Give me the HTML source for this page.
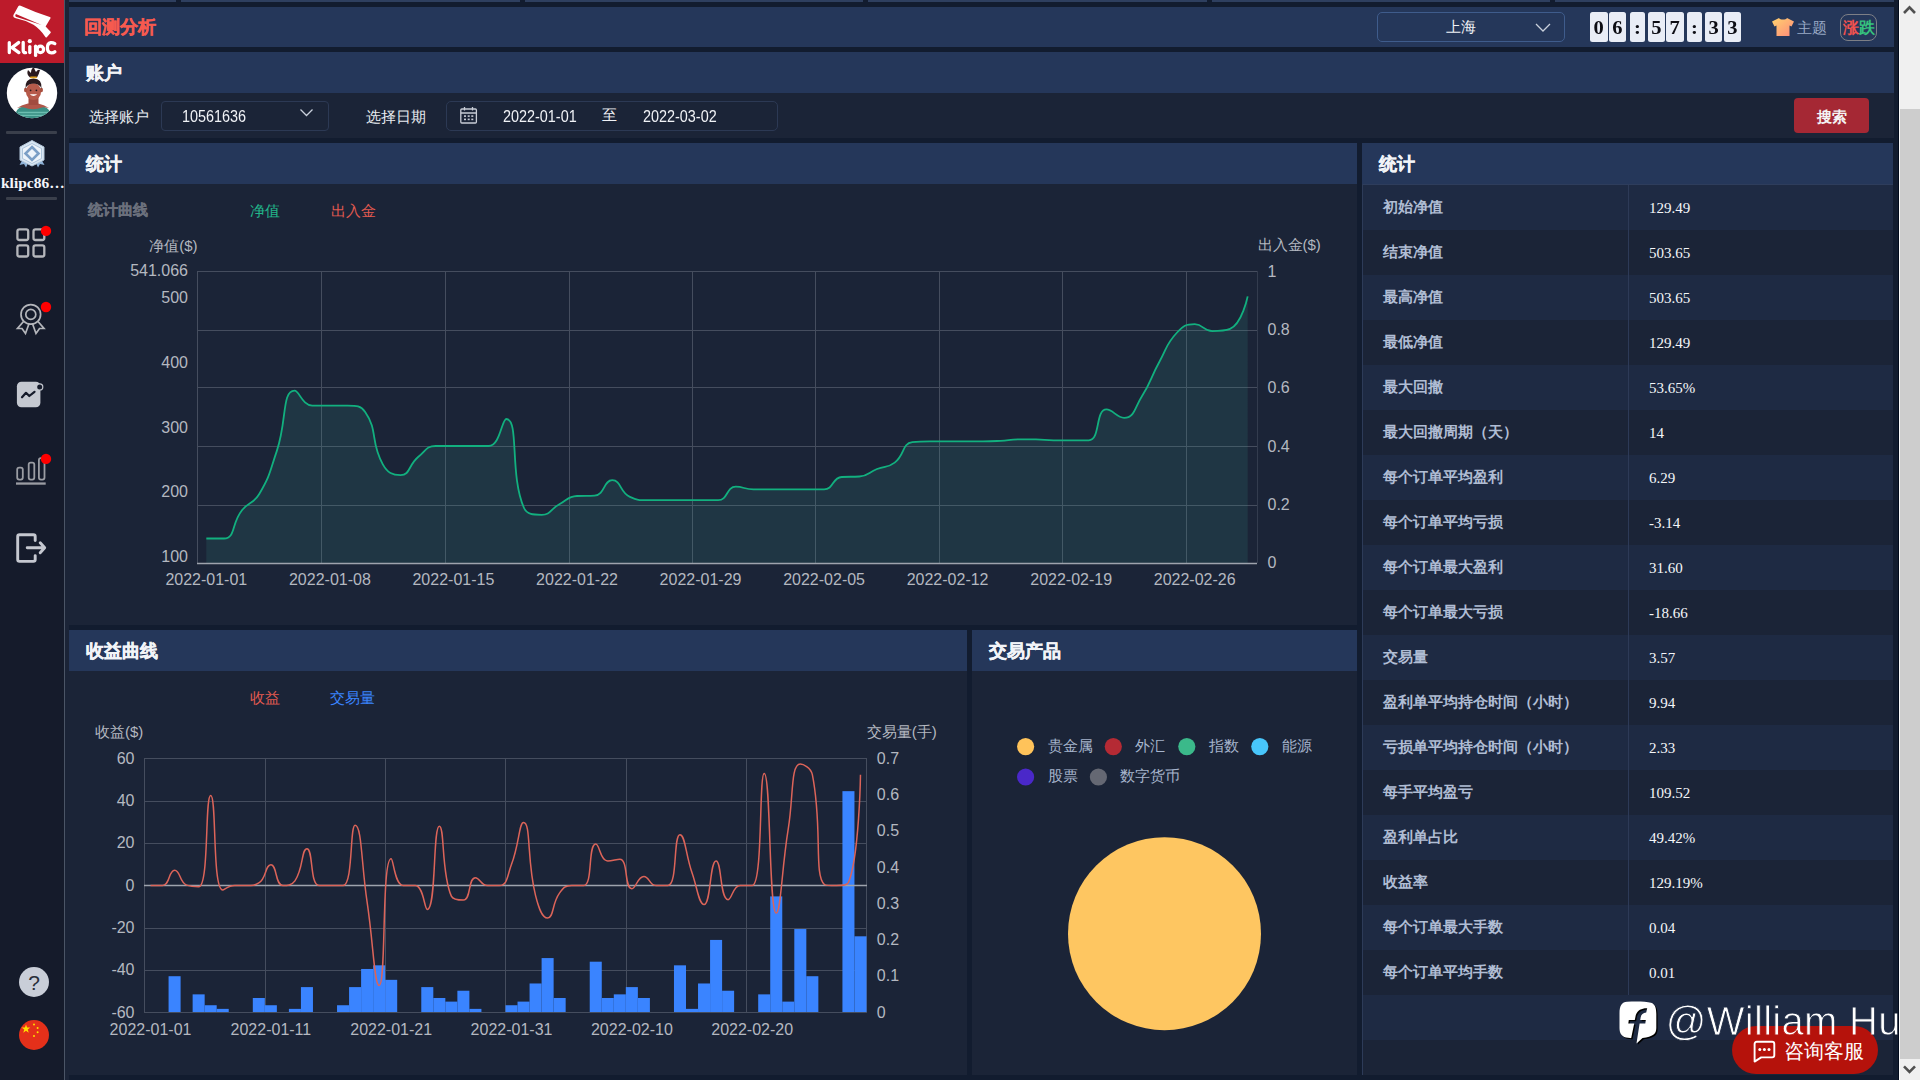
<!DOCTYPE html>
<html><head><meta charset="utf-8"><title>回测分析</title>
<style>
*{margin:0;padding:0;box-sizing:border-box}
html,body{width:1920px;height:1080px;overflow:hidden;background:#121c2f;font-family:"Liberation Sans",sans-serif;}
div,span,svg{position:absolute}
.t{white-space:nowrap;line-height:1}
.hd{background:#25375a}
.bd{background:#1b2437}
.ttl{color:#f2f4f8;font-weight:bold;font-size:18px;-webkit-text-stroke:0.35px #f2f4f8}
</style></head><body>

<div style="left:0;top:0;width:64px;height:1080px;background:#151b2b"></div>
<div style="left:64px;top:0;width:1px;height:1080px;background:#4b5566"></div>
<div style="left:65px;top:0;width:4px;height:1080px;background:#1b2437"></div>
<div style="left:69px;top:0;width:107px;height:2px;background:#2e3f5f"></div>
<div style="left:181px;top:0;width:339px;height:2px;background:#2e3f5f"></div>
<div style="left:525px;top:0;width:338px;height:2px;background:#2e3f5f"></div>
<div style="left:868px;top:0;width:339px;height:2px;background:#2e3f5f"></div>
<div style="left:1212px;top:0;width:338px;height:2px;background:#2e3f5f"></div>
<div style="left:1555px;top:0;width:339px;height:2px;background:#2e3f5f"></div>
<div class="hd" style="left:69px;top:7px;width:1825px;height:40px"></div>
<div class="hd" style="left:69px;top:52px;width:1825px;height:41px"></div>
<div class="bd" style="left:65px;top:93px;width:1829px;height:45px"></div>
<div class="hd" style="left:69px;top:143px;width:1288px;height:41px"></div>
<div class="bd" style="left:69px;top:184px;width:1288px;height:441px"></div>
<div class="hd" style="left:1362px;top:143px;width:531px;height:41px"></div>
<div class="bd" style="left:1362px;top:184px;width:531px;height:891px"></div>
<div class="hd" style="left:69px;top:630px;width:898px;height:41px"></div>
<div class="bd" style="left:69px;top:671px;width:898px;height:404px"></div>
<div class="hd" style="left:972px;top:630px;width:385px;height:41px"></div>
<div class="bd" style="left:972px;top:671px;width:385px;height:404px"></div>
<div style="left:1898px;top:0;width:1px;height:1080px;background:#020b1c"></div><div style="left:1899px;top:0;width:21px;height:1080px;background:#f0f0f0"></div><div style="left:1899px;top:0;width:1px;height:1080px;background:#fafafa"></div>
<div style="left:1900px;top:109px;width:20px;height:950px;background:#cdcdcd"></div>
<svg style="left:1899px;top:0" width="21" height="21"><path d="M5 13 L10.5 7.3 L16 13" fill="none" stroke="#505050" stroke-width="2.6"/></svg>
<svg style="left:1899px;top:1059px" width="21" height="21"><path d="M5 7.3 L10.5 13 L16 7.3" fill="none" stroke="#505050" stroke-width="2.6"/></svg>
<div class="t ttl" style="left:86.0px;top:63.5px">账户</div>
<div class="t ttl" style="left:86.0px;top:154.5px">统计</div>
<div class="t ttl" style="left:1379.0px;top:154.5px">统计</div>
<div class="t ttl" style="left:86.0px;top:641.5px">收益曲线</div>
<div class="t ttl" style="left:989.0px;top:641.5px">交易产品</div>
<div class="t" style="left:84px;top:18px;font-size:18px;font-weight:bold;color:#f65a4f;-webkit-text-stroke:0.35px #f65a4f">回测分析</div>
<div style="left:1377px;top:12px;width:188px;height:30px;border:1px solid #3f5c8c;border-radius:5px"></div>
<div class="t" style="left:1446px;top:19px;font-size:15px;color:#f0f2f6">上海</div>
<svg style="left:1534px;top:21px" width="18" height="12"><path d="M2 3 L9 10 L16 3" fill="none" stroke="#c9d0dc" stroke-width="1.3"/></svg>
<div style="left:1590.0px;top:12px;width:17.5px;height:29.7px;background:#e9edf6;border-radius:2.5px"></div>
<div class="t" style="left:1590.0px;top:18px;width:17.5px;text-align:center;font-family:'Liberation Serif',serif;font-weight:bold;font-size:19px;transform:scaleX(1.08);color:#0d0d14">0</div>
<div style="left:1609.4px;top:12px;width:16.6px;height:29.7px;background:#e9edf6;border-radius:2.5px"></div>
<div class="t" style="left:1609.4px;top:18px;width:16.6px;text-align:center;font-family:'Liberation Serif',serif;font-weight:bold;font-size:19px;transform:scaleX(1.08);color:#0d0d14">6</div>
<div style="left:1630.0px;top:12px;width:15.0px;height:29.7px;background:#e9edf6;border-radius:2.5px"></div>
<div class="t" style="left:1630.0px;top:18px;width:15.0px;text-align:center;font-family:'Liberation Serif',serif;font-weight:bold;font-size:19px;transform:scaleX(1.08);color:#0d0d14">:</div>
<div style="left:1648.2px;top:12px;width:16.8px;height:29.7px;background:#e9edf6;border-radius:2.5px"></div>
<div class="t" style="left:1648.2px;top:18px;width:16.8px;text-align:center;font-family:'Liberation Serif',serif;font-weight:bold;font-size:19px;transform:scaleX(1.08);color:#0d0d14">5</div>
<div style="left:1666.4px;top:12px;width:17.3px;height:29.7px;background:#e9edf6;border-radius:2.5px"></div>
<div class="t" style="left:1666.4px;top:18px;width:17.3px;text-align:center;font-family:'Liberation Serif',serif;font-weight:bold;font-size:19px;transform:scaleX(1.08);color:#0d0d14">7</div>
<div style="left:1687.0px;top:12px;width:15.0px;height:29.7px;background:#e9edf6;border-radius:2.5px"></div>
<div class="t" style="left:1687.0px;top:18px;width:15.0px;text-align:center;font-family:'Liberation Serif',serif;font-weight:bold;font-size:19px;transform:scaleX(1.08);color:#0d0d14">:</div>
<div style="left:1705.2px;top:12px;width:17.3px;height:29.7px;background:#e9edf6;border-radius:2.5px"></div>
<div class="t" style="left:1705.2px;top:18px;width:17.3px;text-align:center;font-family:'Liberation Serif',serif;font-weight:bold;font-size:19px;transform:scaleX(1.08);color:#0d0d14">3</div>
<div style="left:1724.3px;top:12px;width:16.7px;height:29.7px;background:#e9edf6;border-radius:2.5px"></div>
<div class="t" style="left:1724.3px;top:18px;width:16.7px;text-align:center;font-family:'Liberation Serif',serif;font-weight:bold;font-size:19px;transform:scaleX(1.08);color:#0d0d14">3</div>
<svg style="left:1771px;top:17px" width="24" height="20" viewBox="0 0 24 20"><defs><linearGradient id="sg" x1="0" y1="0" x2="1" y2="1"><stop offset="0" stop-color="#ffd36e"/><stop offset="1" stop-color="#ff8a7a"/></linearGradient></defs>
<path d="M8 1 C9 3 15 3 16 1 L23 4.5 L20.5 9.5 L18.5 8.5 L18.5 19 L5.5 19 L5.5 8.5 L3.5 9.5 L1 4.5 Z" fill="url(#sg)"/></svg>
<div class="t" style="left:1797px;top:19.5px;font-size:15px;color:#9aaac6">主题</div>
<div style="left:1840px;top:14px;width:37px;height:27px;border:1.3px solid #7d7f86;border-radius:8px"></div>
<div class="t" style="left:1843px;top:20.2px;font-size:15.5px;font-weight:bold;color:#f0524e">涨<span style="position:static;color:#36c27e">跌</span></div>
<div class="t" style="left:89px;top:108.5px;font-size:15px;color:#e8ebf0">选择账户</div>
<div style="left:161px;top:101px;width:168px;height:30px;border:1px solid #2c3954;border-radius:4px"></div>
<div class="t" style="left:181.5px;top:108.5px;font-size:16px;color:#f0f2f6;transform-origin:0 0;transform:scaleX(0.9)">10561636</div>
<svg style="left:298px;top:107px" width="17" height="12"><path d="M2.5 2.5 L8.5 8.5 L14.5 2.5" fill="none" stroke="#c9d0dc" stroke-width="1.3"/></svg>
<div class="t" style="left:366px;top:108.5px;font-size:15px;color:#e8ebf0">选择日期</div>
<div style="left:446px;top:101px;width:332px;height:30px;border:1px solid #2c3954;border-radius:5px"></div>
<svg style="left:459px;top:106px" width="20" height="19" viewBox="0 0 20 19"><g fill="none" stroke="#c8ccd6" stroke-width="1.3"><rect x="1.8" y="3" width="15.6" height="14" rx="1"/><path d="M1.8 7 H17.4 M5.5 1 V4.5 M13.5 1 V4.5"/></g>
<g fill="#c8ccd6"><rect x="5" y="9.3" width="2" height="1.6"/><rect x="8.7" y="9.3" width="2" height="1.6"/><rect x="12.3" y="9.3" width="2" height="1.6"/><rect x="5" y="12.6" width="2" height="1.6"/><rect x="8.7" y="12.6" width="2" height="1.6"/><rect x="12.3" y="12.6" width="2" height="1.6"/></g></svg>
<div class="t" style="left:502.5px;top:108.5px;font-size:16px;color:#f0f2f6;transform-origin:0 0;transform:scaleX(0.9)">2022-01-01</div>
<div class="t" style="left:601.5px;top:106.5px;font-size:15px;color:#f0f2f6">至</div>
<div class="t" style="left:642.5px;top:108.5px;font-size:16px;color:#f0f2f6;transform-origin:0 0;transform:scaleX(0.9)">2022-03-02</div>
<div style="left:1794px;top:98px;width:75px;height:35px;background:#a52834;border-radius:4px"></div>
<div class="t" style="left:1794px;top:108.5px;width:75px;text-align:center;font-size:15px;font-weight:bold;color:#f4f4f4">搜索</div>
<div style="left:1362px;top:185px;width:531px;height:45px;background:#1e2a43"></div>
<div style="left:1362px;top:275px;width:531px;height:45px;background:#1e2a43"></div>
<div style="left:1362px;top:365px;width:531px;height:45px;background:#1e2a43"></div>
<div style="left:1362px;top:455px;width:531px;height:45px;background:#1e2a43"></div>
<div style="left:1362px;top:545px;width:531px;height:45px;background:#1e2a43"></div>
<div style="left:1362px;top:635px;width:531px;height:45px;background:#1e2a43"></div>
<div style="left:1362px;top:725px;width:531px;height:45px;background:#1e2a43"></div>
<div style="left:1362px;top:815px;width:531px;height:45px;background:#1e2a43"></div>
<div style="left:1362px;top:905px;width:531px;height:45px;background:#1e2a43"></div>
<div style="left:1362px;top:995px;width:531px;height:45px;background:#1e2a43"></div>
<div style="left:1362px;top:184px;width:531px;height:1px;background:#2e3d5c"></div>
<div style="left:1362px;top:184px;width:1px;height:891px;background:#2d3b58"></div>
<div style="left:1628px;top:185px;width:1px;height:810px;background:#2d3a57"></div>
<div class="t" style="left:1383px;top:199px;font-size:15px;font-weight:bold;color:#b0bdd4">初始净值</div>
<div class="t" style="left:1649px;top:201.0px;font-size:15px;font-family:'Liberation Serif',serif;color:#f4f6f9">129.49</div>
<div class="t" style="left:1383px;top:244px;font-size:15px;font-weight:bold;color:#b0bdd4">结束净值</div>
<div class="t" style="left:1649px;top:246.0px;font-size:15px;font-family:'Liberation Serif',serif;color:#f4f6f9">503.65</div>
<div class="t" style="left:1383px;top:289px;font-size:15px;font-weight:bold;color:#b0bdd4">最高净值</div>
<div class="t" style="left:1649px;top:291.0px;font-size:15px;font-family:'Liberation Serif',serif;color:#f4f6f9">503.65</div>
<div class="t" style="left:1383px;top:334px;font-size:15px;font-weight:bold;color:#b0bdd4">最低净值</div>
<div class="t" style="left:1649px;top:336.0px;font-size:15px;font-family:'Liberation Serif',serif;color:#f4f6f9">129.49</div>
<div class="t" style="left:1383px;top:379px;font-size:15px;font-weight:bold;color:#b0bdd4">最大回撤</div>
<div class="t" style="left:1649px;top:381.0px;font-size:15px;font-family:'Liberation Serif',serif;color:#f4f6f9">53.65%</div>
<div class="t" style="left:1383px;top:424px;font-size:15px;font-weight:bold;color:#b0bdd4">最大回撤周期（天）</div>
<div class="t" style="left:1649px;top:426.0px;font-size:15px;font-family:'Liberation Serif',serif;color:#f4f6f9">14</div>
<div class="t" style="left:1383px;top:469px;font-size:15px;font-weight:bold;color:#b0bdd4">每个订单平均盈利</div>
<div class="t" style="left:1649px;top:471.0px;font-size:15px;font-family:'Liberation Serif',serif;color:#f4f6f9">6.29</div>
<div class="t" style="left:1383px;top:514px;font-size:15px;font-weight:bold;color:#b0bdd4">每个订单平均亏损</div>
<div class="t" style="left:1649px;top:516.0px;font-size:15px;font-family:'Liberation Serif',serif;color:#f4f6f9">-3.14</div>
<div class="t" style="left:1383px;top:559px;font-size:15px;font-weight:bold;color:#b0bdd4">每个订单最大盈利</div>
<div class="t" style="left:1649px;top:561.0px;font-size:15px;font-family:'Liberation Serif',serif;color:#f4f6f9">31.60</div>
<div class="t" style="left:1383px;top:604px;font-size:15px;font-weight:bold;color:#b0bdd4">每个订单最大亏损</div>
<div class="t" style="left:1649px;top:606.0px;font-size:15px;font-family:'Liberation Serif',serif;color:#f4f6f9">-18.66</div>
<div class="t" style="left:1383px;top:649px;font-size:15px;font-weight:bold;color:#b0bdd4">交易量</div>
<div class="t" style="left:1649px;top:651.0px;font-size:15px;font-family:'Liberation Serif',serif;color:#f4f6f9">3.57</div>
<div class="t" style="left:1383px;top:694px;font-size:15px;font-weight:bold;color:#b0bdd4">盈利单平均持仓时间（小时）</div>
<div class="t" style="left:1649px;top:696.0px;font-size:15px;font-family:'Liberation Serif',serif;color:#f4f6f9">9.94</div>
<div class="t" style="left:1383px;top:739px;font-size:15px;font-weight:bold;color:#b0bdd4">亏损单平均持仓时间（小时）</div>
<div class="t" style="left:1649px;top:741.0px;font-size:15px;font-family:'Liberation Serif',serif;color:#f4f6f9">2.33</div>
<div class="t" style="left:1383px;top:784px;font-size:15px;font-weight:bold;color:#b0bdd4">每手平均盈亏</div>
<div class="t" style="left:1649px;top:786.0px;font-size:15px;font-family:'Liberation Serif',serif;color:#f4f6f9">109.52</div>
<div class="t" style="left:1383px;top:829px;font-size:15px;font-weight:bold;color:#b0bdd4">盈利单占比</div>
<div class="t" style="left:1649px;top:831.0px;font-size:15px;font-family:'Liberation Serif',serif;color:#f4f6f9">49.42%</div>
<div class="t" style="left:1383px;top:874px;font-size:15px;font-weight:bold;color:#b0bdd4">收益率</div>
<div class="t" style="left:1649px;top:876.0px;font-size:15px;font-family:'Liberation Serif',serif;color:#f4f6f9">129.19%</div>
<div class="t" style="left:1383px;top:919px;font-size:15px;font-weight:bold;color:#b0bdd4">每个订单最大手数</div>
<div class="t" style="left:1649px;top:921.0px;font-size:15px;font-family:'Liberation Serif',serif;color:#f4f6f9">0.04</div>
<div class="t" style="left:1383px;top:964px;font-size:15px;font-weight:bold;color:#b0bdd4">每个订单平均手数</div>
<div class="t" style="left:1649px;top:966.0px;font-size:15px;font-family:'Liberation Serif',serif;color:#f4f6f9">0.01</div>
<svg style="left:0;top:0" width="1920" height="1080">
<path d="M197 271.5 H1258" stroke="#454d5e" stroke-width="1"/>
<path d="M197 330.5 H1258" stroke="#454d5e" stroke-width="1"/>
<path d="M197 387.5 H1258" stroke="#454d5e" stroke-width="1"/>
<path d="M197 446.5 H1258" stroke="#454d5e" stroke-width="1"/>
<path d="M197 505.5 H1258" stroke="#454d5e" stroke-width="1"/>
<path d="M197.5 271 V563" stroke="#454d5e" stroke-width="1"/>
<path d="M321.5 271 V563" stroke="#454d5e" stroke-width="1"/>
<path d="M445.5 271 V563" stroke="#454d5e" stroke-width="1"/>
<path d="M569.5 271 V563" stroke="#454d5e" stroke-width="1"/>
<path d="M692.5 271 V563" stroke="#454d5e" stroke-width="1"/>
<path d="M815.5 271 V563" stroke="#454d5e" stroke-width="1"/>
<path d="M939.5 271 V563" stroke="#454d5e" stroke-width="1"/>
<path d="M1062.5 271 V563" stroke="#454d5e" stroke-width="1"/>
<path d="M1186.5 271 V563" stroke="#454d5e" stroke-width="1"/>
<path d="M1257.5 271 V563" stroke="#333c4e" stroke-width="1"/>
<path d="M206.32 538.50 C206.32 538.50 217.82 538.50 223.97 538.50 C235.47 538.50 231.47 523.50 241.62 510.70 C249.12 501.25 253.25 504.26 259.27 494.00 C270.90 474.21 269.36 472.74 276.93 450.60 C287.01 421.09 281.69 390.70 294.57 390.70 C299.34 390.70 302.22 405.60 312.23 405.60 C319.87 405.60 321.05 405.60 329.88 405.60 C338.70 405.60 338.97 405.60 347.52 405.60 C356.62 405.60 360.70 405.60 365.17 412.00 C378.35 430.85 369.98 441.41 382.82 464.40 C387.63 473.01 392.54 475.20 400.48 475.20 C410.19 475.20 408.43 465.02 418.12 457.00 C426.08 450.42 426.23 446.00 435.77 446.00 C443.88 446.00 444.60 446.00 453.42 446.00 C462.25 446.00 462.25 446.00 471.07 446.00 C479.90 446.00 482.48 446.00 488.72 446.00 C500.13 446.00 501.75 419.00 506.38 419.00 C519.40 419.00 509.42 475.38 524.02 508.00 C527.07 514.80 533.21 514.80 541.67 514.80 C550.86 514.80 550.27 509.12 559.33 504.30 C567.92 499.72 567.71 496.44 576.97 496.00 C585.36 495.60 587.04 496.00 594.62 495.60 C604.69 495.07 603.61 480.20 612.27 480.20 C621.26 480.20 619.78 492.43 629.92 496.90 C637.43 500.20 638.67 500.20 647.58 500.20 C656.32 500.20 656.40 500.20 665.22 500.20 C674.05 500.20 674.05 500.20 682.88 500.20 C691.70 500.20 691.70 500.20 700.52 500.20 C709.35 500.20 710.36 500.20 718.17 500.20 C728.01 500.20 726.04 486.70 735.82 486.70 C743.69 486.70 744.60 489.40 753.47 489.40 C762.25 489.40 762.30 489.40 771.12 489.40 C779.95 489.40 779.95 489.40 788.77 489.40 C797.60 489.40 797.60 489.40 806.42 489.40 C815.25 489.40 816.13 489.40 824.07 489.40 C833.78 489.40 832.02 477.61 841.72 477.00 C849.67 476.50 850.91 477.00 859.38 476.50 C868.56 475.96 868.11 472.51 877.02 469.00 C885.76 465.56 887.43 468.10 894.67 462.60 C905.08 454.70 901.66 443.57 912.32 442.20 C919.31 441.30 921.14 441.30 929.97 441.30 C938.79 441.30 938.80 441.30 947.62 441.30 C956.45 441.30 956.45 441.30 965.27 441.30 C974.10 441.30 974.10 441.40 982.92 441.40 C991.75 441.40 991.76 441.30 1000.57 440.80 C1009.41 440.30 1009.39 439.40 1018.22 439.40 C1027.04 439.40 1027.06 439.40 1035.88 439.40 C1044.71 439.40 1044.69 440.30 1053.53 440.30 C1062.34 440.30 1062.35 440.30 1071.17 440.30 C1080.00 440.30 1082.97 440.30 1088.82 440.30 C1100.62 440.30 1095.08 409.40 1106.47 409.40 C1112.73 409.40 1116.83 417.80 1124.12 417.80 C1134.48 417.80 1134.43 408.07 1141.78 396.40 C1152.08 380.02 1150.02 378.73 1159.42 361.70 C1167.67 346.78 1165.84 344.43 1177.07 332.50 C1183.49 325.68 1185.77 324.20 1194.72 324.20 C1203.42 324.20 1203.27 331.10 1212.38 331.10 C1220.92 331.10 1224.29 331.10 1230.02 328.90 C1241.94 324.33 1247.67 296.40 1247.67 296.40 L1247.67 563 L206.32 563 Z" fill="#3ca096" fill-opacity="0.15"/>
<path d="M206.32 538.50 C206.32 538.50 217.82 538.50 223.97 538.50 C235.47 538.50 231.47 523.50 241.62 510.70 C249.12 501.25 253.25 504.26 259.27 494.00 C270.90 474.21 269.36 472.74 276.93 450.60 C287.01 421.09 281.69 390.70 294.57 390.70 C299.34 390.70 302.22 405.60 312.23 405.60 C319.87 405.60 321.05 405.60 329.88 405.60 C338.70 405.60 338.97 405.60 347.52 405.60 C356.62 405.60 360.70 405.60 365.17 412.00 C378.35 430.85 369.98 441.41 382.82 464.40 C387.63 473.01 392.54 475.20 400.48 475.20 C410.19 475.20 408.43 465.02 418.12 457.00 C426.08 450.42 426.23 446.00 435.77 446.00 C443.88 446.00 444.60 446.00 453.42 446.00 C462.25 446.00 462.25 446.00 471.07 446.00 C479.90 446.00 482.48 446.00 488.72 446.00 C500.13 446.00 501.75 419.00 506.38 419.00 C519.40 419.00 509.42 475.38 524.02 508.00 C527.07 514.80 533.21 514.80 541.67 514.80 C550.86 514.80 550.27 509.12 559.33 504.30 C567.92 499.72 567.71 496.44 576.97 496.00 C585.36 495.60 587.04 496.00 594.62 495.60 C604.69 495.07 603.61 480.20 612.27 480.20 C621.26 480.20 619.78 492.43 629.92 496.90 C637.43 500.20 638.67 500.20 647.58 500.20 C656.32 500.20 656.40 500.20 665.22 500.20 C674.05 500.20 674.05 500.20 682.88 500.20 C691.70 500.20 691.70 500.20 700.52 500.20 C709.35 500.20 710.36 500.20 718.17 500.20 C728.01 500.20 726.04 486.70 735.82 486.70 C743.69 486.70 744.60 489.40 753.47 489.40 C762.25 489.40 762.30 489.40 771.12 489.40 C779.95 489.40 779.95 489.40 788.77 489.40 C797.60 489.40 797.60 489.40 806.42 489.40 C815.25 489.40 816.13 489.40 824.07 489.40 C833.78 489.40 832.02 477.61 841.72 477.00 C849.67 476.50 850.91 477.00 859.38 476.50 C868.56 475.96 868.11 472.51 877.02 469.00 C885.76 465.56 887.43 468.10 894.67 462.60 C905.08 454.70 901.66 443.57 912.32 442.20 C919.31 441.30 921.14 441.30 929.97 441.30 C938.79 441.30 938.80 441.30 947.62 441.30 C956.45 441.30 956.45 441.30 965.27 441.30 C974.10 441.30 974.10 441.40 982.92 441.40 C991.75 441.40 991.76 441.30 1000.57 440.80 C1009.41 440.30 1009.39 439.40 1018.22 439.40 C1027.04 439.40 1027.06 439.40 1035.88 439.40 C1044.71 439.40 1044.69 440.30 1053.53 440.30 C1062.34 440.30 1062.35 440.30 1071.17 440.30 C1080.00 440.30 1082.97 440.30 1088.82 440.30 C1100.62 440.30 1095.08 409.40 1106.47 409.40 C1112.73 409.40 1116.83 417.80 1124.12 417.80 C1134.48 417.80 1134.43 408.07 1141.78 396.40 C1152.08 380.02 1150.02 378.73 1159.42 361.70 C1167.67 346.78 1165.84 344.43 1177.07 332.50 C1183.49 325.68 1185.77 324.20 1194.72 324.20 C1203.42 324.20 1203.27 331.10 1212.38 331.10 C1220.92 331.10 1224.29 331.10 1230.02 328.90 C1241.94 324.33 1247.67 296.40 1247.67 296.40" fill="none" stroke="#12b07f" stroke-width="1.8"/>
<path d="M197 563.5 H1257" stroke="#9ea3ad" stroke-width="1.5"/>
<path d="M144 758.5 H867" stroke="#454d5e" stroke-width="1"/>
<path d="M144 801.5 H867" stroke="#454d5e" stroke-width="1"/>
<path d="M144 843.5 H867" stroke="#454d5e" stroke-width="1"/>
<path d="M144 928.5 H867" stroke="#454d5e" stroke-width="1"/>
<path d="M144 970.5 H867" stroke="#454d5e" stroke-width="1"/>
<path d="M144.5 758 V1012" stroke="#454d5e" stroke-width="1"/>
<path d="M265.5 758 V1012" stroke="#454d5e" stroke-width="1"/>
<path d="M385.5 758 V1012" stroke="#454d5e" stroke-width="1"/>
<path d="M505.5 758 V1012" stroke="#454d5e" stroke-width="1"/>
<path d="M626.5 758 V1012" stroke="#454d5e" stroke-width="1"/>
<path d="M746.5 758 V1012" stroke="#454d5e" stroke-width="1"/>
<path d="M866.5 758 V1012" stroke="#454d5e" stroke-width="1"/>
<rect x="168.57" y="976.21" width="12.03" height="36.29" fill="#3a84ff"/>
<rect x="192.63" y="994.36" width="12.03" height="18.14" fill="#3a84ff"/>
<rect x="204.67" y="1005.24" width="12.03" height="7.26" fill="#3a84ff"/>
<rect x="216.70" y="1008.87" width="12.03" height="3.63" fill="#3a84ff"/>
<rect x="252.80" y="997.99" width="12.03" height="14.51" fill="#3a84ff"/>
<rect x="264.83" y="1005.24" width="12.03" height="7.26" fill="#3a84ff"/>
<rect x="288.90" y="1008.87" width="12.03" height="3.63" fill="#3a84ff"/>
<rect x="300.93" y="987.10" width="12.03" height="25.40" fill="#3a84ff"/>
<rect x="337.03" y="1005.24" width="12.03" height="7.26" fill="#3a84ff"/>
<rect x="349.07" y="987.10" width="12.03" height="25.40" fill="#3a84ff"/>
<rect x="361.10" y="968.96" width="12.03" height="43.54" fill="#3a84ff"/>
<rect x="373.13" y="965.33" width="12.03" height="47.17" fill="#3a84ff"/>
<rect x="385.17" y="979.84" width="12.03" height="32.66" fill="#3a84ff"/>
<rect x="421.27" y="987.10" width="12.03" height="25.40" fill="#3a84ff"/>
<rect x="433.30" y="997.99" width="12.03" height="14.51" fill="#3a84ff"/>
<rect x="445.33" y="1001.61" width="12.03" height="10.89" fill="#3a84ff"/>
<rect x="457.37" y="990.73" width="12.03" height="21.77" fill="#3a84ff"/>
<rect x="469.40" y="1008.87" width="12.03" height="3.63" fill="#3a84ff"/>
<rect x="505.50" y="1005.24" width="12.03" height="7.26" fill="#3a84ff"/>
<rect x="517.53" y="1001.61" width="12.03" height="10.89" fill="#3a84ff"/>
<rect x="529.57" y="983.47" width="12.03" height="29.03" fill="#3a84ff"/>
<rect x="541.60" y="958.07" width="12.03" height="54.43" fill="#3a84ff"/>
<rect x="553.63" y="997.99" width="12.03" height="14.51" fill="#3a84ff"/>
<rect x="589.73" y="961.70" width="12.03" height="50.80" fill="#3a84ff"/>
<rect x="601.77" y="997.99" width="12.03" height="14.51" fill="#3a84ff"/>
<rect x="613.80" y="994.36" width="12.03" height="18.14" fill="#3a84ff"/>
<rect x="625.83" y="987.10" width="12.03" height="25.40" fill="#3a84ff"/>
<rect x="637.87" y="997.99" width="12.03" height="14.51" fill="#3a84ff"/>
<rect x="673.97" y="965.33" width="12.03" height="47.17" fill="#3a84ff"/>
<rect x="686.00" y="1008.87" width="12.03" height="3.63" fill="#3a84ff"/>
<rect x="698.03" y="983.47" width="12.03" height="29.03" fill="#3a84ff"/>
<rect x="710.07" y="939.93" width="12.03" height="72.57" fill="#3a84ff"/>
<rect x="722.10" y="990.73" width="12.03" height="21.77" fill="#3a84ff"/>
<rect x="758.20" y="994.36" width="12.03" height="18.14" fill="#3a84ff"/>
<rect x="770.23" y="896.39" width="12.03" height="116.11" fill="#3a84ff"/>
<rect x="782.27" y="1001.61" width="12.03" height="10.89" fill="#3a84ff"/>
<rect x="794.30" y="929.04" width="12.03" height="83.46" fill="#3a84ff"/>
<rect x="806.33" y="976.21" width="12.03" height="36.29" fill="#3a84ff"/>
<rect x="842.43" y="791.16" width="12.03" height="221.34" fill="#3a84ff"/>
<rect x="854.47" y="936.30" width="12.03" height="76.20" fill="#3a84ff"/>
<path d="M144 885.5 H867" stroke="#9ea3ad" stroke-width="1.5"/>
<path d="M150.52 885.50 C150.52 885.50 157.95 885.50 162.55 885.50 C169.98 885.50 168.52 870.25 174.58 870.25 C180.55 870.25 179.26 882.41 186.62 885.08 C191.30 886.77 197.25 886.77 198.65 886.77 C209.28 886.77 204.77 795.47 210.68 795.47 C216.80 795.47 212.11 889.95 222.72 889.95 C224.15 889.95 228.54 885.50 234.75 885.50 C240.57 885.50 240.83 885.50 246.78 885.50 C252.87 885.50 254.48 885.50 258.82 882.96 C266.51 878.45 265.12 864.74 270.85 864.74 C277.15 864.74 275.06 885.50 282.88 885.50 C287.09 885.50 291.63 885.50 294.92 880.84 C303.67 868.43 301.30 848.64 306.95 848.64 C313.33 848.64 309.80 885.50 318.98 885.50 C321.83 885.50 325.00 885.50 331.02 885.50 C337.03 885.50 341.08 885.50 343.05 885.50 C353.11 885.50 349.78 825.34 355.08 825.34 C361.81 825.34 361.33 863.75 367.12 902.23 C373.37 943.82 374.36 985.48 379.15 985.48 C386.39 985.48 381.40 858.81 391.18 858.81 C393.43 858.81 394.69 885.50 403.22 885.50 C406.72 885.50 411.52 885.50 415.25 885.50 C423.55 885.50 424.38 909.44 427.28 909.44 C436.41 909.44 432.79 826.19 439.32 826.19 C444.82 826.19 441.14 873.59 451.35 896.09 C453.18 900.12 459.38 900.12 463.38 900.12 C471.42 900.12 467.72 877.66 475.42 877.66 C479.75 877.66 480.90 885.50 487.45 885.50 C492.94 885.50 495.50 885.50 499.48 885.50 C507.54 885.50 507.19 875.62 511.52 864.32 C519.23 844.16 519.10 822.59 523.55 822.59 C531.14 822.59 526.63 860.13 535.58 895.67 C538.66 907.89 541.88 918.12 547.62 918.12 C553.91 918.12 551.66 903.74 559.65 892.91 C563.69 887.43 565.18 885.50 571.68 885.50 C577.22 885.50 581.10 885.50 583.72 885.50 C593.13 885.50 587.62 843.98 595.75 843.98 C599.66 843.98 600.19 860.93 607.78 860.93 C612.22 860.93 616.49 859.23 619.82 859.23 C628.52 859.23 624.04 888.68 631.85 888.68 C636.07 888.68 637.47 876.39 643.88 876.39 C649.51 876.39 649.22 885.50 655.92 885.50 C661.25 885.50 665.70 885.50 667.95 885.50 C677.73 885.50 673.17 834.66 679.98 834.66 C685.20 834.66 685.51 853.89 692.02 872.79 C697.54 888.85 698.89 904.56 704.05 904.56 C710.92 904.56 709.74 860.93 716.08 860.93 C721.77 860.93 719.87 899.69 728.12 899.69 C731.90 899.69 732.84 885.50 740.15 885.50 C744.88 885.50 751.02 885.50 752.18 885.50 C763.06 885.50 758.85 773.44 764.22 773.44 C770.89 773.44 768.77 913.04 776.25 913.04 C780.80 913.04 781.49 870.76 788.28 828.73 C793.52 796.30 790.64 764.12 800.32 764.12 C802.68 764.12 810.82 767.08 812.35 774.71 C822.86 827.24 813.54 874.76 824.38 884.44 C825.57 885.50 830.48 885.50 836.42 885.50 C842.51 885.50 847.22 885.50 848.45 882.53 C859.25 856.57 860.48 774.71 860.48 774.71" fill="none" stroke="#dc6459" stroke-width="1.5"/>
<path d="M144 1012.5 H867" stroke="#454d5e" stroke-width="1"/>
<circle cx="1164.5" cy="933.7" r="96.5" fill="#fec661"/>
<circle cx="1025.6" cy="746.6" r="8.6" fill="#ffc35a"/>
<circle cx="1113.3" cy="746.6" r="8.6" fill="#b52a34"/>
<circle cx="1186.8" cy="746.6" r="8.6" fill="#3bb98a"/>
<circle cx="1259.8" cy="746.6" r="8.6" fill="#48c6fb"/>
<circle cx="1025.6" cy="777.0" r="8.6" fill="#4a28c9"/>
<circle cx="1098.4" cy="777.0" r="8.6" fill="#656873"/>
</svg>
<div class="t" style="left:-112.0px;top:263.2px;width:300px;text-align:right;font-size:16px;color:#b4b8c0">541.066</div>
<div class="t" style="left:-112.0px;top:290.1px;width:300px;text-align:right;font-size:16px;color:#b4b8c0">500</div>
<div class="t" style="left:-112.0px;top:354.9px;width:300px;text-align:right;font-size:16px;color:#b4b8c0">400</div>
<div class="t" style="left:-112.0px;top:419.6px;width:300px;text-align:right;font-size:16px;color:#b4b8c0">300</div>
<div class="t" style="left:-112.0px;top:484.3px;width:300px;text-align:right;font-size:16px;color:#b4b8c0">200</div>
<div class="t" style="left:-112.0px;top:549.0px;width:300px;text-align:right;font-size:16px;color:#b4b8c0">100</div>
<div class="t" style="left:1267.5px;top:263.5px;font-size:16px;color:#b4b8c0">1</div>
<div class="t" style="left:1267.5px;top:321.8px;font-size:16px;color:#b4b8c0">0.8</div>
<div class="t" style="left:1267.5px;top:380.2px;font-size:16px;color:#b4b8c0">0.6</div>
<div class="t" style="left:1267.5px;top:438.6px;font-size:16px;color:#b4b8c0">0.4</div>
<div class="t" style="left:1267.5px;top:497.0px;font-size:16px;color:#b4b8c0">0.2</div>
<div class="t" style="left:1267.5px;top:554.8px;font-size:16px;color:#b4b8c0">0</div>
<div class="t" style="left:56.3px;top:572.0px;width:300px;text-align:center;font-size:16px;color:#b4b8c0">2022-01-01</div>
<div class="t" style="left:179.9px;top:572.0px;width:300px;text-align:center;font-size:16px;color:#b4b8c0">2022-01-08</div>
<div class="t" style="left:303.4px;top:572.0px;width:300px;text-align:center;font-size:16px;color:#b4b8c0">2022-01-15</div>
<div class="t" style="left:427.0px;top:572.0px;width:300px;text-align:center;font-size:16px;color:#b4b8c0">2022-01-22</div>
<div class="t" style="left:550.5px;top:572.0px;width:300px;text-align:center;font-size:16px;color:#b4b8c0">2022-01-29</div>
<div class="t" style="left:674.1px;top:572.0px;width:300px;text-align:center;font-size:16px;color:#b4b8c0">2022-02-05</div>
<div class="t" style="left:797.6px;top:572.0px;width:300px;text-align:center;font-size:16px;color:#b4b8c0">2022-02-12</div>
<div class="t" style="left:921.2px;top:572.0px;width:300px;text-align:center;font-size:16px;color:#b4b8c0">2022-02-19</div>
<div class="t" style="left:1044.7px;top:572.0px;width:300px;text-align:center;font-size:16px;color:#b4b8c0">2022-02-26</div>
<div class="t" style="left:-102.5px;top:237.5px;width:300px;text-align:right;font-size:15px;color:#b4b8c0">净值($)</div>
<div class="t" style="left:1257.5px;top:237.3px;font-size:15px;color:#b4b8c0">出入金($)</div>
<div class="t" style="left:88.0px;top:202.2px;font-size:15px;color:#6b707c;font-weight:bold;-webkit-text-stroke:0.3px #6b707c">统计曲线</div>
<div class="t" style="left:250.3px;top:202.5px;font-size:15px;color:#22b88b">净值</div>
<div class="t" style="left:330.8px;top:202.5px;font-size:15px;color:#e35a50">出入金</div>
<div class="t" style="left:-165.5px;top:750.6px;width:300px;text-align:right;font-size:16px;color:#b4b8c0">60</div>
<div class="t" style="left:-165.5px;top:793.0px;width:300px;text-align:right;font-size:16px;color:#b4b8c0">40</div>
<div class="t" style="left:-165.5px;top:835.3px;width:300px;text-align:right;font-size:16px;color:#b4b8c0">20</div>
<div class="t" style="left:-165.5px;top:877.7px;width:300px;text-align:right;font-size:16px;color:#b4b8c0">0</div>
<div class="t" style="left:-165.5px;top:920.1px;width:300px;text-align:right;font-size:16px;color:#b4b8c0">-20</div>
<div class="t" style="left:-165.5px;top:962.4px;width:300px;text-align:right;font-size:16px;color:#b4b8c0">-40</div>
<div class="t" style="left:-165.5px;top:1004.8px;width:300px;text-align:right;font-size:16px;color:#b4b8c0">-60</div>
<div class="t" style="left:876.8px;top:750.6px;font-size:16px;color:#b4b8c0">0.7</div>
<div class="t" style="left:876.8px;top:786.9px;font-size:16px;color:#b4b8c0">0.6</div>
<div class="t" style="left:876.8px;top:823.2px;font-size:16px;color:#b4b8c0">0.5</div>
<div class="t" style="left:876.8px;top:859.5px;font-size:16px;color:#b4b8c0">0.4</div>
<div class="t" style="left:876.8px;top:895.8px;font-size:16px;color:#b4b8c0">0.3</div>
<div class="t" style="left:876.8px;top:932.1px;font-size:16px;color:#b4b8c0">0.2</div>
<div class="t" style="left:876.8px;top:968.4px;font-size:16px;color:#b4b8c0">0.1</div>
<div class="t" style="left:876.8px;top:1004.7px;font-size:16px;color:#b4b8c0">0</div>
<div class="t" style="left:0.5px;top:1022.2px;width:300px;text-align:center;font-size:16px;color:#b4b8c0">2022-01-01</div>
<div class="t" style="left:120.9px;top:1022.2px;width:300px;text-align:center;font-size:16px;color:#b4b8c0">2022-01-11</div>
<div class="t" style="left:241.2px;top:1022.2px;width:300px;text-align:center;font-size:16px;color:#b4b8c0">2022-01-21</div>
<div class="t" style="left:361.5px;top:1022.2px;width:300px;text-align:center;font-size:16px;color:#b4b8c0">2022-01-31</div>
<div class="t" style="left:481.9px;top:1022.2px;width:300px;text-align:center;font-size:16px;color:#b4b8c0">2022-02-10</div>
<div class="t" style="left:602.2px;top:1022.2px;width:300px;text-align:center;font-size:16px;color:#b4b8c0">2022-02-20</div>
<div class="t" style="left:95.0px;top:723.5px;font-size:15px;color:#b4b8c0">收益($)</div>
<div class="t" style="left:866.7px;top:723.5px;font-size:15px;color:#b4b8c0">交易量(手)</div>
<div class="t" style="left:250.0px;top:690.2px;font-size:15px;color:#e35a50">收益</div>
<div class="t" style="left:330.0px;top:690.2px;font-size:15px;color:#3a84ff">交易量</div>
<div class="t" style="left:1047.5px;top:737.7px;font-size:15px;color:#a6b4cc">贵金属</div>
<div class="t" style="left:1135.0px;top:737.7px;font-size:15px;color:#a6b4cc">外汇</div>
<div class="t" style="left:1208.8px;top:737.7px;font-size:15px;color:#a6b4cc">指数</div>
<div class="t" style="left:1282.0px;top:737.7px;font-size:15px;color:#a6b4cc">能源</div>
<div class="t" style="left:1047.5px;top:768.2px;font-size:15px;color:#a6b4cc">股票</div>
<div class="t" style="left:1120.2px;top:768.2px;font-size:15px;color:#a6b4cc">数字货币</div>
<div style="left:0;top:0;width:64px;height:62.5px;background:#bd1b2b"></div>
<svg style="left:0;top:0" width="64" height="62" viewBox="0 0 64 62">
<path d="M13.3 15.2 L18.3 6.3 Q19.2 5.1 20.6 5.8 Q34 12 49.8 16.9 Q51 17.3 50.5 18.3 L45.6 26.4 L50.6 31.8 Q51.1 32.5 50.5 33.1 L46.8 37.2 Q46.2 37.8 45.6 37.2 Q40 29 33.5 24.8 Q25 20 15 18 Q12.8 17.3 13.3 15.2 Z" fill="#ffffff"/>
<path d="M15.9 13.9 Q14.6 15.2 15.8 16.8 L41.6 25.1 Z" fill="#bd1b2b"/>
<g fill="none" stroke="#ffffff" stroke-width="3.3" stroke-linecap="round" stroke-linejoin="round">
<path d="M9.3 42.6 V52.6 M18.6 42.6 L12 47.6 L18.9 52.6"/>
<path d="M23.2 42.4 V50.2 Q23.2 52.7 25.6 52.7"/>
<path d="M29.8 46.6 V52.6"/>
<path d="M35.6 46.2 V55.4"/>
<circle cx="40.4" cy="49.4" r="3.2"/>
<path d="M54.8 43.6 Q52.6 42.3 50.8 42.6 Q47.2 43.4 47.4 48 Q47.6 52.6 51.4 52.9 Q53.5 53 54.9 51.8"/>
</g>
<circle cx="29.8" cy="41.2" r="2.1" fill="#ffffff"/>
</svg>
<svg style="left:6px;top:67px" width="52" height="52" viewBox="0 0 52 52">
<defs><clipPath id="av"><circle cx="26" cy="26" r="25.2"/></clipPath></defs>
<circle cx="26" cy="26" r="25.2" fill="#ffffff"/>
<g clip-path="url(#av)">
<path d="M8 52 Q9 41 17 39.5 L37 39.5 Q45 41 46 52 Z" fill="#3a9085"/>
<path d="M12 45.5 H42 M11 48.3 H43" stroke="#6cbdb0" stroke-width="1.3"/>
<path d="M11 41 Q16 37.5 22 36.5 L32 36.5 Q38 37.5 43 41 Q38 40 36 40.5 Q27 44 18 40.5 Q15 40 11 41 Z" fill="#b0574a"/>
<rect x="22.5" y="29" width="10" height="9" fill="#a24c40"/>
<ellipse cx="27.5" cy="24.5" rx="7.6" ry="8.6" fill="#b65a4a"/>
<ellipse cx="19.6" cy="23" rx="1.6" ry="2.2" fill="#a9503f"/><ellipse cx="35.4" cy="23" rx="1.6" ry="2.2" fill="#a9503f"/>
<path d="M19.5 22 Q18.5 11.5 27.5 11.5 Q36.5 11.5 35.5 22 Q34.5 17 27.5 16.5 Q20.5 17 19.5 22 Z" fill="#2a1a1e"/>
<path d="M24 10.5 Q20 7 22 3 Q24 5 25 6 Q25 1 28 0.5 Q29 4 30 5 Q32 2 34 3 Q33 7 31 10.5 Z" fill="#2a1a1e"/>
<rect x="24" y="9.6" width="7" height="1.6" rx="0.8" fill="#e3a421"/>
<path d="M23.8 27.3 Q27.5 30.5 31.2 27.3 Z" fill="#fff"/>
<circle cx="24.6" cy="23.3" r="0.9" fill="#2a1a1e"/><circle cx="30.4" cy="23.3" r="0.9" fill="#2a1a1e"/>
</g></svg>
<div style="left:6px;top:131px;width:51px;height:3px;background:#3a3f4b;border-radius:1px"></div>
<svg style="left:17px;top:139px" width="30" height="30" viewBox="0 0 30 30">
<path d="M6 20 L2.5 26 L7 25 L9 28.5 L12 22 Z M24 20 L27.5 26 L23 25 L21 28.5 L18 22 Z" fill="#8fb3d8"/>
<path d="M15 1.5 L27 8 L27 21 L15 27 L3 21 L3 8 Z" fill="#d9e6f2" stroke="#b5c9dc" stroke-width="1"/>
<path d="M15 4.5 L24.5 9.5 L24.5 19.5 L15 24.5 L5.5 19.5 L5.5 9.5 Z" fill="#eef4fa" stroke="#9fbad4" stroke-width="0.8"/>
<path d="M15 8 L21.5 14.5 L15 21 L8.5 14.5 Z" fill="none" stroke="#7b9fc6" stroke-width="2.6"/>
</svg>
<div class="t" style="left:1px;top:175px;font-family:'Liberation Serif',serif;font-size:15.5px;font-weight:bold;color:#f4f6fa">klipc86…</div>
<div style="left:6px;top:197px;width:51px;height:3px;background:#3a3f4b;border-radius:1px"></div>
<svg style="left:0;top:200px" width="64" height="380" viewBox="0 200 64 380">
<g fill="none" stroke="#b4b6bb" stroke-width="2.3">
<rect x="17.4" y="229.4" width="10.8" height="10.6" rx="2"/><rect x="33.5" y="229.4" width="10.8" height="10.6" rx="2"/>
<rect x="17.4" y="245.3" width="10.8" height="11.2" rx="2"/><rect x="33.5" y="245.3" width="10.8" height="11.2" rx="2"/>
</g>
<circle cx="46" cy="230.9" r="5.2" fill="#ff0000"/>
<g fill="none" stroke="#b4b6bb" stroke-width="1.7">
<circle cx="30.8" cy="314.4" r="9.8"/><circle cx="30.8" cy="314.4" r="5"/>
<path d="M23.5 321.5 L17.5 328.5 L22 328.5 L25.5 333.5 L29 323.8 M38 321.5 L44 328.5 L39.5 328.5 L36 333.5 L32.5 323.8"/>
</g>
<circle cx="46" cy="307" r="5.2" fill="#ff0000"/>
<rect x="16.9" y="381.7" width="23.5" height="25.5" rx="4.5" fill="#c5c9d1"/>
<circle cx="39.7" cy="386.9" r="3.7" fill="#c5c9d1"/><circle cx="39.7" cy="386.9" r="2.5" fill="#151b2b"/>
<path d="M22 397.3 L26 392.8 L29.3 396 L34.5 391.8" fill="none" stroke="#151b2b" stroke-width="2.2" stroke-linecap="round" stroke-linejoin="round"/>
<g fill="none" stroke="#9a9ca3" stroke-width="1.8">
<rect x="17.2" y="467.6" width="5.6" height="12" rx="2"/><rect x="28.7" y="462.6" width="5.6" height="17" rx="2"/><rect x="38.9" y="458.1" width="5.6" height="21.5" rx="2"/>
</g>
<rect x="16" y="482.4" width="29.7" height="2.3" fill="#9a9ca3"/>
<circle cx="46" cy="458.9" r="5.2" fill="#ff0000"/>
<g fill="none" stroke="#c5c8d0" stroke-width="2.9" stroke-linecap="round" stroke-linejoin="round">
<path d="M35.2 540.6 V536.5 Q35.2 534.7 33.4 534.7 H19.5 Q17.7 534.7 17.7 536.5 V559.6 Q17.7 561.4 19.5 561.4 H33.4 Q35.2 561.4 35.2 559.6 V555.6"/>
<path d="M27.2 547.8 H43.8 M40.2 542.8 L44.7 547.8 L40.2 552.8"/>
</g>
</svg>
<svg style="left:18px;top:966px" width="32" height="86" viewBox="0 0 32 86">
<circle cx="16" cy="16" r="15" fill="#c9ced8"/>
<text x="16" y="23.5" text-anchor="middle" font-family="Liberation Sans" font-size="21" fill="#2a2f3a">?</text>
<circle cx="16" cy="69" r="15" fill="#e4301a"/>
<path d="M8.00 58.40 L9.09 61.50 L12.37 61.58 L9.76 63.57 L10.70 66.72 L8.00 64.85 L5.30 66.72 L6.24 63.57 L3.63 61.58 L6.91 61.50 Z" fill="#ffde00"/>
<circle cx="16" cy="58.4" r="1" fill="#ffde00"/><circle cx="19.6" cy="61.9" r="1" fill="#ffde00"/>
<circle cx="19.6" cy="66.3" r="1" fill="#ffde00"/><circle cx="16" cy="70" r="1" fill="#ffde00"/>
</svg>
<div style="left:1731.5px;top:1025.8px;width:146px;height:48.2px;background:#b5120b;border-radius:24px"></div>
<svg style="left:1752px;top:1040px" width="26" height="24" viewBox="0 0 26 24"><path d="M4.8 1.8 H20.2 Q22.3 1.8 22.3 3.9 V15.3 Q22.3 17.4 20.2 17.4 H9.2 L2.6 21.6 V3.9 Q2.6 1.8 4.8 1.8 Z" fill="none" stroke="#fff" stroke-width="1.9" stroke-linejoin="round"/>
<circle cx="7.8" cy="9.4" r="1.5" fill="#fff"/><circle cx="12.4" cy="9.4" r="1.5" fill="#fff"/><circle cx="17" cy="9.4" r="1.5" fill="#fff"/></svg>
<div class="t" style="left:1784px;top:1041px;font-size:20px;color:#fff">咨询客服</div>
<svg style="left:1612px;top:995px" width="54" height="54" viewBox="0 0 54 54">
<defs><mask id="fbm" maskUnits="userSpaceOnUse" x="0" y="0" width="54" height="54">
<path d="M15 6.7 C24 6.2 34 6.3 39 7.8 C43 9 44.3 13 44.3 19 L44.3 33 C44.3 39 41 41.5 30.5 43 L24.5 48.5 L22 43.5 L14 42.5 C9.5 41.5 7.5 38 7.5 33 L7.5 18 C7.5 10.5 10 7 15 6.7 Z" fill="#fff"/>
<path d="M35.2 13.2 C30 13 25.5 15 23.8 20 L22.8 25 L16.8 25 L16.3 28.5 L22.2 28.5 L19 44 L20 49 L24.4 49 L27.6 28.5 L33.3 28.5 L33.8 25 L28.2 25 L28.7 22.2 C29.3 19.3 31 17.6 34.2 17.4 Z" fill="#000"/>
</mask></defs>
<g transform="translate(1.3,1.3)"><rect x="0" y="0" width="54" height="54" fill="#000" mask="url(#fbm)"/></g>
<rect x="0" y="0" width="54" height="54" fill="#fff" mask="url(#fbm)"/>
</svg>
<svg style="left:1600px;top:990px" width="300" height="60" viewBox="1600 990 300 60"><defs><mask id="wmm" maskUnits="userSpaceOnUse" x="1600" y="990" width="300" height="60"><rect x="1600" y="990" width="300" height="60" fill="#000"/>
<text x="1665.8" y="1034.5" font-family="Liberation Sans" font-size="40" letter-spacing="0.3" fill="#fff" stroke="#000" stroke-width="0.9">@William Hu</text></mask></defs>
<rect x="1600" y="990" width="300" height="60" fill="#fff" mask="url(#wmm)"/></svg>
</body></html>
